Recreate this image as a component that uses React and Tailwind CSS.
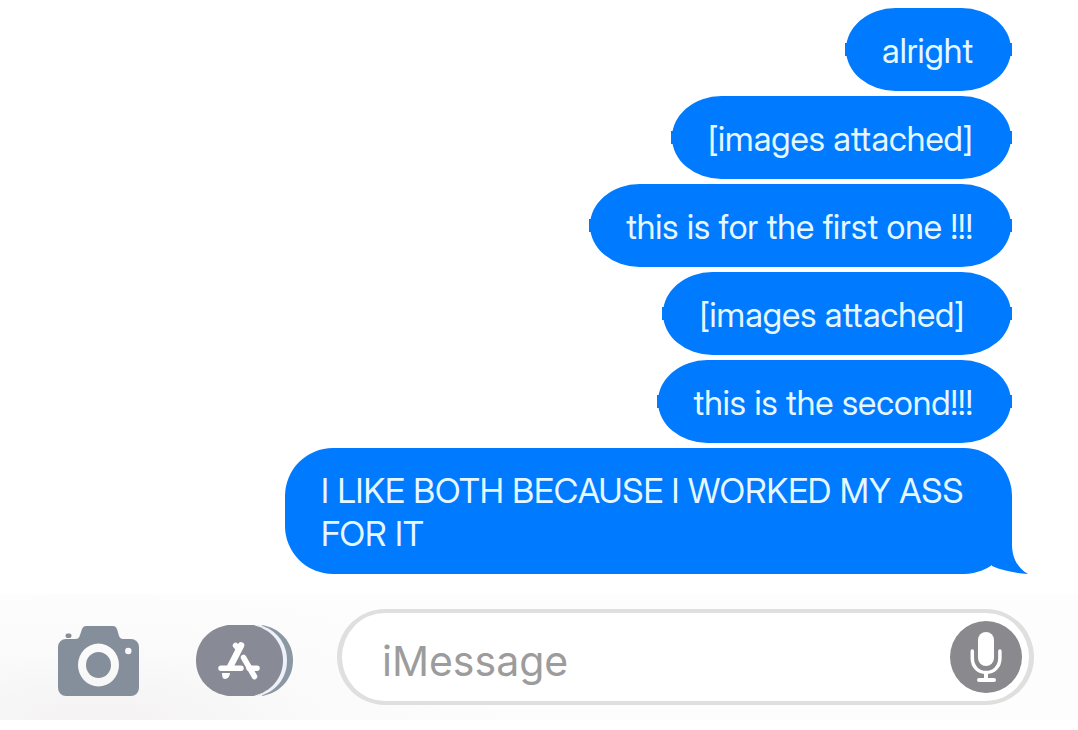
import { useState } from 'react';

const messages = [
  { id: 1, text: 'alright' },
  { id: 2, text: '[images attached]' },
  { id: 3, text: 'this is for the first one !!!' },
  { id: 4, text: '[images attached]\u00a0' },
  { id: 5, text: 'this is the second!!!' },
];

function Bubble({ children }) {
  return (
    <li className="relative mx-px rounded-[50px/42px] bg-[#007aff] pt-[21px] pr-[38px] pb-[19px] pl-9 text-[34px] leading-[43px] text-[#e6f8ff] before:absolute before:-inset-x-px before:top-[35px] before:h-[13px] before:bg-[#007aff]">
      <span className="relative">{children}</span>
    </li>
  );
}

function TailBubble({ children }) {
  return (
    <li className="relative max-w-[727px] rounded-[48px] bg-[#007aff] pt-[21px] pr-[38px] pb-[19px] pl-9 text-[34px] leading-[43px] text-[#e6f8ff]">
      {children}
      <svg className="absolute -right-4 bottom-0" width="38" height="48" viewBox="0 0 38 48" fill="#007aff" aria-hidden="true">
        <path d="M0 0h22v18c0 13 5 24 16 30-12-1-25-3-36-8z" />
      </svg>
    </li>
  );
}

function CameraIcon() {
  return (
    <svg width="81" height="70" viewBox="0 0 81 70" fill="#858f9b" aria-hidden="true">
      <rect x="7.500" y="7.500" width="6" height="4.500" rx="2" />
      <path
        fillRule="evenodd"
        d="M8 13h9c3 0 4-1 5-4l2-6c1-2 2-3 4-3h27c2 0 3 1 4 3l2 7c1 2 2 3 4 3h8a8 8 0 0 1 8 8v41a8 8 0 0 1-8 8H8a8 8 0 0 1-8-8V21a8 8 0 0 1 8-8zM40.500 17.500a20.500 21.500 0 1 0 0 43 20.500 21.500 0 0 0 0-43zM70.300 21.800a3.200 3.200 0 1 0 0 6.400 3.200 3.200 0 0 0 0-6.400z"
      />
      <ellipse cx="40.500" cy="39" rx="12.500" ry="13" />
    </svg>
  );
}

function AppsIcon() {
  return (
    <svg width="97" height="71" viewBox="0 0 97 71" aria-hidden="true">
      <path d="M66 0c18 3 31 17 31 35.500S84 68 66 71z" fill="#8b98a3" />
      <path d="M58 0h5c17 4 28 18 28 35.500S80 67 63 71h-5z" fill="#eef1fa" />
      <path d="M32 0h25c18 4 30 18 30 35.500S75 67 57 71H32C13 68 0 54 0 35.500S13 3 32 0z" fill="#888b95" />
      <g fill="none" stroke="#fff" strokeLinecap="round">
        <path d="M45 20.500 34.500 41" strokeWidth="6.500" />
        <path d="m39.500 20.500 2.500 3" strokeWidth="5.500" />
        <path d="M25 43.300h20M53 43.300h8" strokeWidth="5.500" />
        <path d="M47.500 32.500 58.500 51.500" strokeWidth="5.500" />
      </g>
      <path d="M26 48h8c0 3-2.500 6-5 6s-3-3-3-6z" fill="#fff" />
    </svg>
  );
}

function MicIcon() {
  return (
    <svg width="72" height="72" viewBox="0 0 72 72" fill="none" stroke="#fff" aria-hidden="true">
      <rect x="28" y="11" width="16" height="34" rx="8" fill="#fff" stroke="none" />
      <path d="M22.300 30v7c0 9 6 14.500 13.700 14.500S49.900 46 49.900 37v-7" strokeWidth="3.500" strokeLinecap="round" />
      <path d="M36 52v6" strokeWidth="4" />
      <path d="M29 59h15" strokeWidth="4" strokeLinecap="round" />
    </svg>
  );
}

export default function App() {
  const [draft, setDraft] = useState('');

  return (
    <main className="min-h-screen bg-white font-['Inter_Display','Inter','Liberation_Sans',sans-serif]">
      <ul className="flex flex-col items-end gap-[5px] pt-2 pr-[66px] pb-5 pl-4">
        {messages.map(m => <Bubble key={m.id}>{m.text}</Bubble>)}
        <TailBubble>I LIKE BOTH BECAUSE I WORKED MY ASS FOR IT</TailBubble>
      </ul>
      <form
        onSubmit={e => e.preventDefault()}
        className="flex items-end bg-[radial-gradient(ellipse_420px_130px_at_9%_100%,#f4f2f2_0%,#fafafa_50%,#fdfdfd_100%)] py-[15px] pr-11 pl-[58px]"
      >
        <button type="button" aria-label="Camera" className="mr-[57px] mb-[9px] shrink-0">
          <CameraIcon />
        </button>
        <button type="button" aria-label="Apps" className="mr-11 mb-[9px] shrink-0">
          <AppsIcon />
        </button>
        <div className="flex h-24 min-w-0 grow items-center rounded-full border-x-[5px] border-y-4 border-[#dfdfdf] bg-white pr-[7px] pl-10">
          <input
            type="text"
            aria-label="iMessage"
            placeholder="iMessage"
            value={draft}
            onChange={e => setDraft(e.target.value)}
            className="h-16 min-w-0 grow pt-2 font-['Inter','Liberation_Sans',sans-serif] text-[41px] text-gray-800 outline-none placeholder:text-[#9c9c9c]"
          />
          <button type="button" aria-label="Dictate" className="shrink-0 rounded-full bg-[#8a898e]">
            <MicIcon />
          </button>
        </div>
      </form>
    </main>
  );
}
